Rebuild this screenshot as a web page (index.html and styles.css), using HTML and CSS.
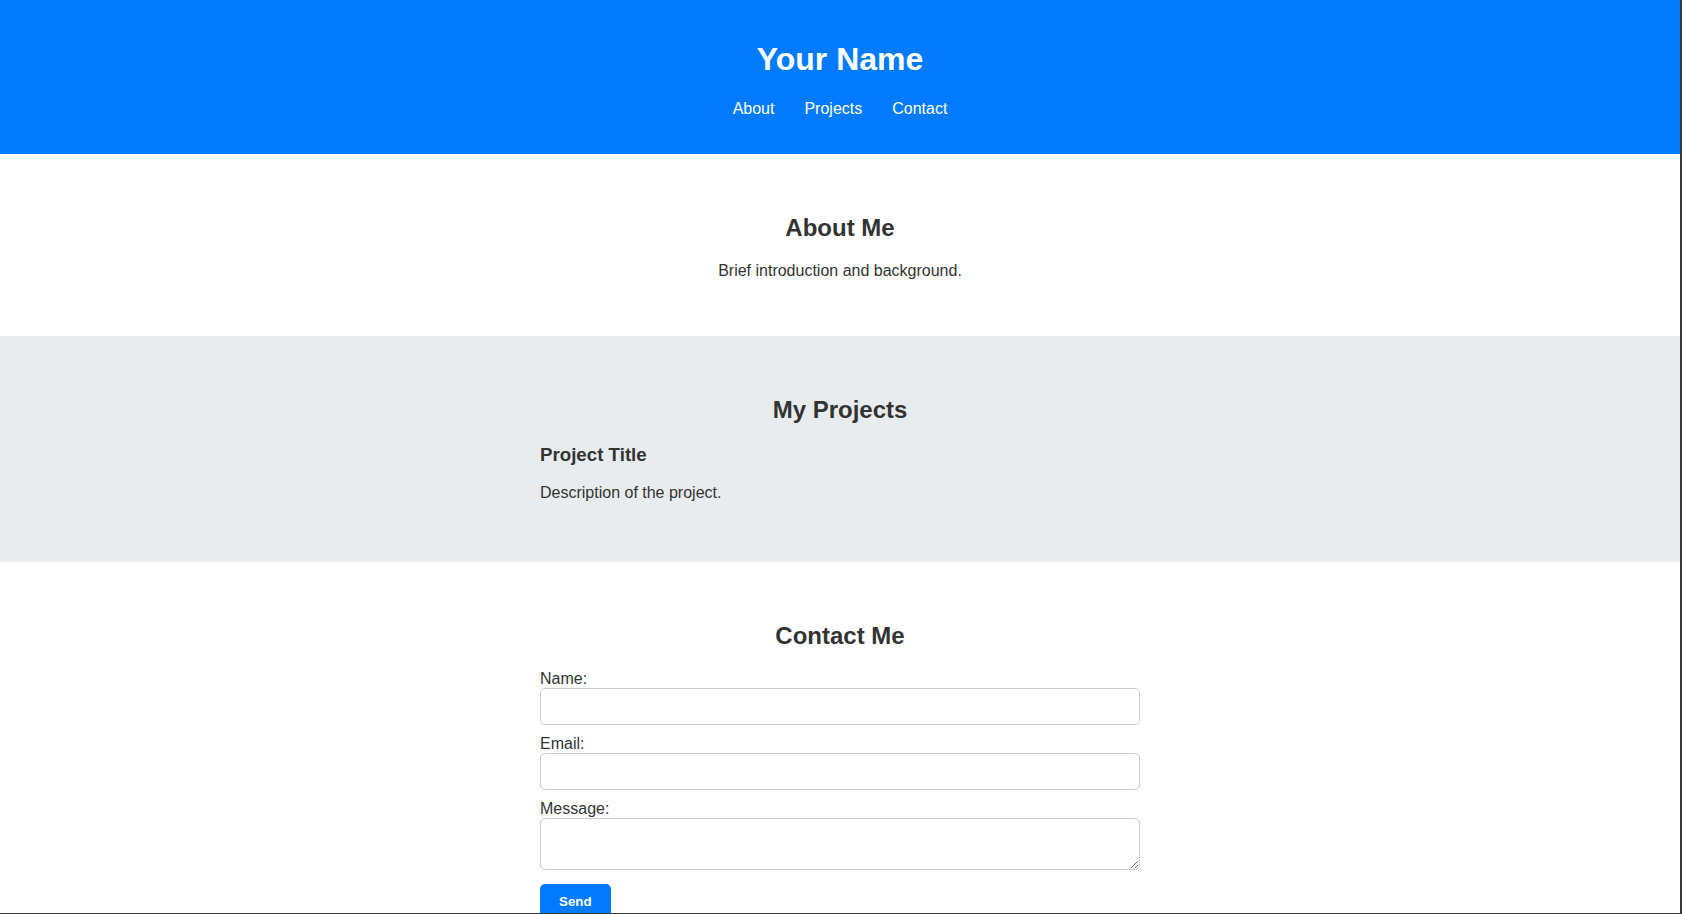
FILE: index.html
```html
<!DOCTYPE html>
<html lang="en">
<head>
<meta charset="utf-8">
<title>Your Name</title>
<link rel="stylesheet" href="styles.css">
</head>
<body>
<header class="site-header">
  <h1 class="site-title">Your Name</h1>
  <nav>
    <ul class="nav-list">
      <li><a class="nav-link" href="#about">About</a></li>
      <li><a class="nav-link" href="#projects">Projects</a></li>
      <li><a class="nav-link" href="#contact">Contact</a></li>
    </ul>
  </nav>
</header>

<section class="section" id="about">
  <div class="container centered">
    <h2 class="section-title">About Me</h2>
    <p class="text">Brief introduction and background.</p>
  </div>
</section>

<section class="section section-alt" id="projects">
  <div class="container">
    <h2 class="section-title">My Projects</h2>
    <div class="project">
      <h3 class="project-title">Project Title</h3>
      <p class="text">Description of the project.</p>
    </div>
  </div>
</section>

<section class="section" id="contact">
  <div class="container">
    <h2 class="section-title">Contact Me</h2>
    <form class="contact-form">
      <label class="field-label" for="name">Name:</label>
      <input class="field" type="text" id="name">
      <label class="field-label" for="email">Email:</label>
      <input class="field" type="email" id="email">
      <label class="field-label" for="message">Message:</label>
      <textarea class="field field-area" id="message"></textarea>
      <button class="send-btn" type="button">Send</button>
    </form>
  </div>
</section>
<div class="window-edge"></div>
</body>
</html>
```

FILE: styles.css
```css
html {
  border-right: 2px solid #3a3a3a;
  min-height: 100%;
}

body {
  margin: 0;
  font-family: "Liberation Sans", Arial, sans-serif;
  color: #333;
  background: #fff;
  line-height: normal;
}

.site-header {
  background: #007bff;
  color: #fff;
  text-align: center;
  padding: 20px;
}

.site-title {
  margin: 21.44px 0;
  font-size: 32px;
  font-weight: bold;
}

.nav-list {
  list-style: none;
  margin: 16px 0;
  padding: 0;
  display: flex;
  justify-content: center;
  gap: 30px;
  font-size: 16px;
}

.nav-link {
  color: #fff;
  text-decoration: none;
}

.section {
  padding: 40px 20px;
}

.section-alt {
  background: #e9ecef;
}

.container {
  max-width: 600px;
  margin: 0 auto;
}

.centered {
  text-align: center;
}

.section-title {
  text-align: center;
  font-size: 24px;
  margin: 19.92px 0;
}

.text {
  font-size: 16px;
  margin: 16px 0;
}

.project {
  margin-bottom: 20px;
}

.project-title {
  font-size: 18.72px;
  margin: 18.72px 0;
}

.contact-form {
  margin: 0;
}

.field-label {
  display: block;
  font-size: 16px;
}

.field {
  display: block;
  width: 100%;
  box-sizing: border-box;
  height: 37px;
  padding: 8px;
  margin: 0 0 10px;
  border: 1px solid #ccc;
  border-radius: 5px;
  font-family: "Liberation Sans", Arial, sans-serif;
  font-size: 16px;
  background: #fff;
}

.field-area {
  height: 52px;
  margin-bottom: 14px;
  resize: vertical;
}

.send-btn {
  display: inline-block;
  background: #007bff;
  color: #fff;
  border: none;
  border-radius: 5px;
  padding: 10px 19px;
  font-family: "Liberation Sans", Arial, sans-serif;
  font-size: 13.33px;
  font-weight: bold;
  cursor: pointer;
}

.window-edge {
  position: fixed;
  left: 0;
  right: 0;
  bottom: 0;
  height: 1px;
  background: #3a3a3a;
  pointer-events: none;
}
```
